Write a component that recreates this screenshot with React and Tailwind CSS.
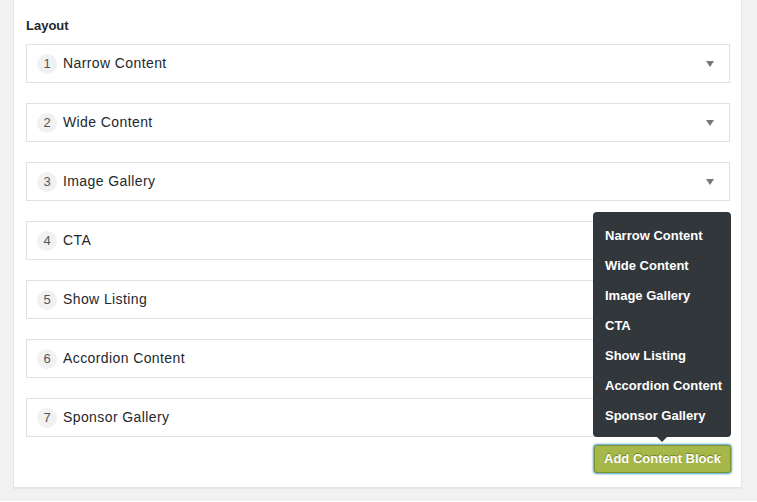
const layouts = [
  "Narrow Content",
  "Wide Content",
  "Image Gallery",
  "CTA",
  "Show Listing",
  "Accordion Content",
  "Sponsor Gallery",
];

// only the first three rows show their collapse arrow, the menu covers the rest
const LayoutRow = ({ index, label, showArrow }) => (
  <div className="flex items-center h-[39px] border border-[#e1e1e1] bg-white pl-[10px] pr-[15px]">
    <span className="flex items-center justify-center w-[20px] h-[20px] rounded-full bg-[#f1f1f1] text-[13px] text-[#555]">
      {index}
    </span>
    <span className="ml-[6px] text-[14px] tracking-[0.4px] text-[#23282d]">{label}</span>
    {showArrow && (
      <span className="ml-auto w-0 h-0 border-l-[4px] border-r-[4px] border-t-[6px] border-l-transparent border-r-transparent border-t-[#777]" />
    )}
  </div>
);

const App = () => {
  return (
    <div
      className="min-h-[502px] w-full bg-[#f1f1f1] pb-[13px]"
      style={{ fontFamily: '"Liberation Sans", Arial, sans-serif' }}
    >
      <div className="ml-[13px] w-[729px] -mt-px bg-white border border-[#e5e5e5] shadow-[0_1px_1px_rgba(0,0,0,0.04)] pl-[12px] pr-[11px] pt-[17px] pb-[14px]">
        <div className="h-[18px] leading-[18px] text-[13px] font-bold text-[#23282d] mb-[9px]">
          Layout
        </div>
        <div className="flex flex-col gap-[20px]">
          {layouts.map((label, i) => (
            <LayoutRow key={label} index={i + 1} label={label} showArrow={i < 3} />
          ))}
        </div>
        <div className="flex justify-end mt-[8px] -mr-px">
          <div className="relative">
            <div className="absolute right-0 bottom-[36px] w-[138px] rounded-[4px] bg-[#32373c] pt-[9px] pb-[6px]">
              {layouts.map((label) => (
                <div
                  key={label}
                  className="h-[30px] leading-[30px] px-[12px] text-[13px] font-bold text-white whitespace-nowrap"
                >
                  {label}
                </div>
              ))}
              <span className="absolute left-1/2 -translate-x-1/2 -bottom-[5px] w-0 h-0 border-l-[5px] border-r-[5px] border-t-[5px] border-l-transparent border-r-transparent border-t-[#32373c]" />
            </div>
            <button
              type="button"
              className="h-[28px] w-[137px] rounded-[3px] border border-[#7e9131] bg-[#a6b84a] text-[13px] font-bold text-white shadow-[0_0_2px_1px_rgba(30,140,190,0.8)] [text-shadow:0_-1px_1px_#6b7d22]"
            >
              Add Content Block
            </button>
          </div>
        </div>
      </div>
    </div>
  );
};

export default App;
